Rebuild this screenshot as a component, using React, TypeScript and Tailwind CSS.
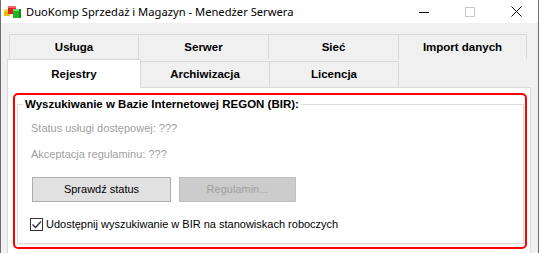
import React from 'react';

const ui = { fontFamily: '"Liberation Sans", Arial, sans-serif' };

const AppIcon = () => (
  <svg width="18" height="14" viewBox="0 0 18 14">
    <rect x="0" y="4" width="6" height="7" fill="#f2c200" />
    <rect x="0" y="4" width="6" height="2" fill="#ffe45c" />
    <rect x="4" y="1" width="8" height="8" fill="#e02020" />
    <rect x="4" y="1" width="8" height="2" fill="#ff6060" />
    <rect x="9" y="4" width="8" height="9" fill="#1fb81f" />
    <rect x="9" y="4" width="8" height="2" fill="#6fe06f" />
    <rect x="15" y="4" width="2" height="9" fill="#128a12" />
  </svg>
);

const TitleBar = () => (
  <div className="flex h-[23px] items-center bg-white">
    <div className="ml-[3px] mt-[1px]">
      <AppIcon />
    </div>
    <span
      className="ml-[4px] text-[11.2px] leading-[16px] text-black"
      style={{ fontFamily: '"Noto Sans", "Open Sans", sans-serif' }}
    >
      DuoKomp Sprzedaż i Magazyn - Menedżer Serwera
    </span>
    <div className="ml-auto mr-[16px] flex items-center gap-[36px]">
      <svg width="10" height="10" viewBox="0 0 10 10">
        <line x1="0" y1="5.5" x2="10" y2="5.5" stroke="#000" strokeWidth="1" />
      </svg>
      <svg width="10" height="10" viewBox="0 0 10 10">
        <rect x="0.5" y="0.5" width="9" height="9" fill="none" stroke="#c8c8c8" strokeWidth="1" />
      </svg>
      <svg width="11" height="11" viewBox="0 0 11 11">
        <path d="M0.5 0.5 L10.5 10.5 M10.5 0.5 L0.5 10.5" stroke="#000" strokeWidth="1" />
      </svg>
    </div>
  </div>
);

const Tab = ({ label, first, width = 'w-[130px]' }: { label: string; first?: boolean; width?: string }) => (
  <div
    className={`flex h-[25px] ${width} items-center justify-center border-t border-r border-[#d9d9d9] bg-[#f0f0f0] pt-[1px] text-[11.5px] font-bold text-black ${
      first ? 'border-l' : ''
    }`}
  >
    {label}
  </div>
);

const App: React.FC = () => {
  return (
    <div className="h-[253px] w-[541px] overflow-hidden bg-white" style={ui}>
      <div className="flex h-[253px] w-[539px] flex-col border-x border-[#6e6e6e]">
        <TitleBar />
        <div className="flex-1 overflow-hidden bg-[#f0f0f0] pl-[6px] pt-[11px]">
          <div className="ml-[2px] flex">
            <Tab label="Usługa" first />
            <Tab label="Serwer" />
            <Tab label="Sieć" />
            <Tab label="Import danych" width="w-[128px]" />
          </div>
          <div className="flex h-[28px] items-end">
            <div className="relative z-10 flex h-[29px] w-[134px] self-start items-start justify-center border-x border-t border-[#d9d9d9] bg-white pt-[6px] text-[11.5px] font-bold text-black">
              Rejestry
            </div>
            <div className="flex h-[26px] w-[129px] items-center justify-center border-t border-r border-[#d9d9d9] bg-[#f0f0f0] text-[11.5px] font-bold text-black">
              Archiwizacja
            </div>
            <div className="flex h-[26px] w-[129px] items-center justify-center border-t border-r border-[#d9d9d9] bg-[#f0f0f0] text-[11.5px] font-bold text-black">
              Licencja
            </div>
          </div>
          <div className="h-[200px] w-[524px] border-x border-t border-[#d9d9d9] bg-white pl-[5px] pt-[5px]">
            <div className="w-[514px] rounded-[5px] border-2 border-[#ff0000] pl-[2px] pr-[1px] pt-[3px] pb-[3px]">
              <fieldset className="border border-[#dcdcdc] pb-[12px]">
                <legend className="ml-[5px] px-[2px] text-[11.5px] font-bold leading-[13px] text-black">
                  Wyszukiwanie w Bazie Internetowej REGON (BIR):
                </legend>
                <div className="ml-[13px] mt-[11px] text-[11px] leading-[13px] text-[#a0a0a0]">
                  Status usługi dostępowej: ???
                </div>
                <div className="ml-[13px] mt-[13px] text-[11px] leading-[13px] text-[#a0a0a0]">
                  Akceptacja regulaminu: ???
                </div>
                <div className="ml-[14px] mt-[16px] flex gap-[8px]">
                  <button className="h-[25px] w-[139px] border border-[#adadad] bg-[#e1e1e1] text-[11px] text-black">
                    Sprawdź status
                  </button>
                  <button
                    disabled
                    className="h-[25px] w-[117px] border border-[#bfbfbf] bg-[#cccccc] text-[11px] text-[#a0a0a0]"
                  >
                    Regulamin...
                  </button>
                </div>
                <label className="ml-[12px] mt-[16px] flex h-[13px] items-center text-[11px] leading-[13px] text-black">
                  <span className="flex h-[13px] w-[13px] items-center justify-center border border-[#333333] bg-white">
                    <svg width="11" height="11" viewBox="0 0 11 11">
                      <path d="M1.5 5.5 L4.5 8.5 L10 2.5" fill="none" stroke="#333333" strokeWidth="1.3" />
                    </svg>
                  </span>
                  <span className="ml-[3px]">Udostępnij wyszukiwanie w BIR na stanowiskach roboczych</span>
                </label>
              </fieldset>
            </div>
          </div>
        </div>
      </div>
    </div>
  );
};

export default App;
